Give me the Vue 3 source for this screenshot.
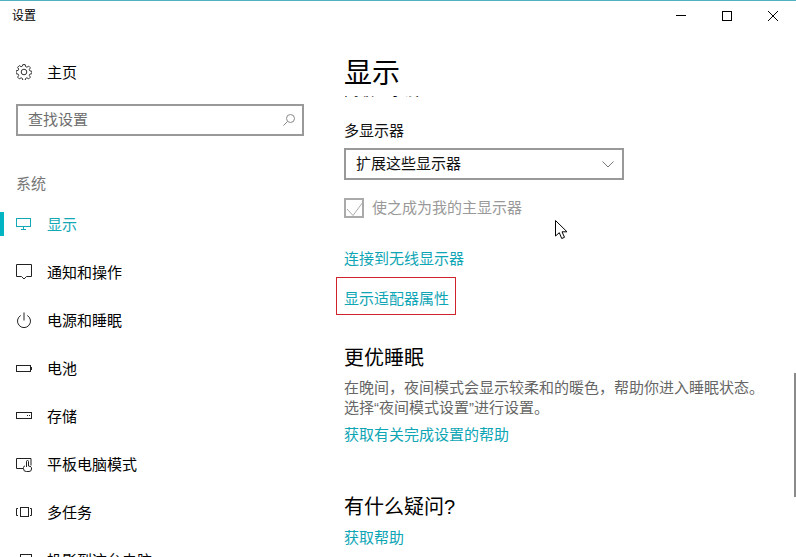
<script setup>
const nav = [
  { label: '显示', icon: 'display', active: true },
  { label: '通知和操作', icon: 'notify' },
  { label: '电源和睡眠', icon: 'power' },
  { label: '电池', icon: 'battery' },
  { label: '存储', icon: 'storage' },
  { label: '平板电脑模式', icon: 'tablet' },
  { label: '多任务', icon: 'multi' },
  { label: '投影到这台电脑', icon: 'project' },
]
</script>

<template>
  <div class="window">
    <header class="titlebar">
      <span class="title">设置</span>
      <div class="controls">
        <svg class="ctl" width="46" height="30" viewBox="0 0 46 30"><path d="M18 14.500h10" stroke="#000" fill="none" /></svg>
        <svg class="ctl" width="46" height="30" viewBox="0 0 46 30"><rect x="18.500" y="10.500" width="9" height="9" stroke="#000" fill="none" /></svg>
        <svg class="ctl" width="46" height="30" viewBox="0 0 46 30"><path d="M18 10l10 10M28 10L18 20" stroke="#000" fill="none" /></svg>
      </div>
    </header>
    <div class="body">
      <aside class="side">
        <div class="home">
          <svg class="icon" width="16" height="16" viewBox="0 0 16 16" fill="none" stroke="#333">
            <circle cx="8" cy="8" r="2.800" />
            <path d="M6.800.6h2.400l.4 2 1.300.6 1.800-1.100 1.700 1.700-1.100 1.800.6 1.300 2 .4v2.400l-2 .4-.6 1.300 1.100 1.800-1.700 1.700-1.800-1.100-1.300.6-.4 2H6.800l-.4-2-1.300-.6-1.800 1.100-1.700-1.700 1.100-1.800-.6-1.300-2-.4V6.800l2-.4.6-1.300-1.100-1.800 1.700-1.700 1.800 1.100 1.300-.6z" />
          </svg>
          <span class="label">主页</span>
        </div>
        <div class="search">
          <span class="lifted">查找设置</span>
          <svg width="12" height="12" viewBox="0 0 12 12" fill="none" stroke="#888">
            <circle cx="7.500" cy="4.500" r="4" />
            <path d="M4.600 7.400L.4 11.600" />
          </svg>
        </div>
        <div class="group">系统</div>
        <nav class="nav">
          <div v-for="item in nav" :key="item.label" class="item" :class="{ active: item.active }">
            <svg class="icon" width="16" height="16" viewBox="0 0 16 16" fill="none" stroke="currentColor">
              <template v-if="item.icon === 'display'">
                <rect x="0.500" y="2.500" width="14" height="8" />
                <path d="M7.500 10.500v3M5 13.500h5" />
              </template>
              <path v-else-if="item.icon === 'notify'" d="M.5.5h15v12H10.500L8 15 5.500 12.500H.5z" />
              <path v-else-if="item.icon === 'power'" d="M8 .5v8M4.700 3.500a6.500 6.500 0 1 0 6.600 0" />
              <template v-else-if="item.icon === 'battery'">
                <rect x="0.500" y="5.500" width="14" height="6" />
                <path d="M15.500 7v3" />
              </template>
              <template v-else-if="item.icon === 'storage'">
                <rect x="0.500" y="4.500" width="15" height="6" />
                <path d="M11 7.500h1M13 7.500h1" />
              </template>
              <template v-else-if="item.icon === 'tablet'">
                <path d="M7 12.500H.5v-10h14.500v7" />
                <path d="M10.500 11V5.500a1 1 0 0 1 2 0V10l2.500.8a1 1 0 0 1 .5.9V13a2.500 2.500 0 0 1-2.500 2.500h-2.500A2.800 2.800 0 0 1 7.500 12.700V11.500a1.500 1.500 0 0 1 1.500-1.500" fill="#fff" />
              </template>
              <template v-else-if="item.icon === 'multi'">
                <rect x="4.500" y="3.500" width="8" height="9" />
                <path d="M2 4.500H.5v7H2M14 4.500h1.500v7H14" />
              </template>
              <template v-else>
                <rect x="4.500" y="2.500" width="11" height="8" />
              </template>
            </svg>
            <span class="label">{{ item.label }}</span>
          </div>
        </nav>
      </aside>
      <main class="main">
        <h1>显示</h1>
        <div class="scroller">
          <div class="cut">高级显示设置</div>
          <div class="sub">多显示器</div>
          <div class="select">
            <span class="lifted">扩展这些显示器</span>
            <svg width="12" height="7" viewBox="0 0 12 7" fill="none" stroke="#777"><path d="M.5.5L6 6l5.500-5.500" /></svg>
          </div>
          <div class="check">
            <span class="box">
              <svg width="20" height="20" viewBox="0 0 20 20" fill="none" stroke="#aaa"><path d="M3 11l6 6.500L19 4" /></svg>
            </span>
            <span>使之成为我的主显示器</span>
          </div>
          <a class="link first">连接到无线显示器</a>
          <div class="marked"><a class="link">显示适配器属性</a></div>
          <h2>更优睡眠</h2>
          <p>在晚间，夜间模式会显示较柔和的暖色，帮助你进入睡眠状态。<br />选择“夜间模式设置”进行设置。</p>
          <a class="link help">获取有关完成设置的帮助</a>
          <h2 class="q">有什么疑问?</h2>
          <a class="link ask">获取帮助</a>
          <div class="bar"></div>
          <svg class="cursor" width="14" height="20" viewBox="0 0 14 20"><path d="M.5.5v15.500l3.800-3.300 2.400 5.800 2.800-1.200-2.500-5.500h5z" fill="#fff" stroke="#000" /></svg>
        </div>
      </main>
    </div>
  </div>
</template>

<style>
html, body { margin: 0; background: #fff; }
</style>

<style scoped>
.window {
  width: 796px;
  height: 557px;
  overflow: hidden;
  background: #fff;
  border-top: 1px solid #4fb3bf;
  box-sizing: border-box;
  font-family: "Liberation Sans", "Noto Sans CJK SC", sans-serif;
  font-size: 15px;
  color: #000;
  display: flex;
  flex-direction: column;
}
.titlebar {
  height: 30px;
  flex: none;
  display: flex;
  justify-content: space-between;
  align-items: flex-start;
  padding-left: 12px;
  font-size: 12px;
}
.title { line-height: 31px; }
.controls { display: flex; }
.ctl { display: block; }
.body { flex: 1; display: flex; min-height: 0; }
.side { width: 328px; flex: none; padding-top: 17px; }
.home, .item { display: flex; align-items: center; height: 48px; padding-left: 16px; gap: 15px; }
.label { line-height: 20px; padding-top: 2px; }
.icon { flex: none; display: block; }
.lifted { padding-bottom: 3px; }
.search {
  margin: 8px 0 0 16px;
  width: 288px;
  height: 32px;
  box-sizing: border-box;
  border: 2px solid #999;
  display: flex;
  align-items: center;
  justify-content: space-between;
  padding: 0 7px 0 10px;
  color: #6e6e6e;
}
.group { margin: 38px 0 0 16px; height: 26px; line-height: 20px; color: #777; }
.item { position: relative; color: #222; }
.item .label { color: #000; }
.item.active { color: #14a8b6; }
.item.active .label { color: #14a8b6; }
.item.active::before {
  content: "";
  position: absolute;
  left: 0;
  top: 12px;
  width: 4px;
  height: 24px;
  background: #00b4c4;
}
.main { flex: 1; min-width: 0; display: flex; flex-direction: column; }
h1 { margin: 19px 0 0 16px; font-size: 28px; font-weight: 400; line-height: 48px; height: 46px; }
.scroller { flex: 1; min-height: 0; overflow: hidden; position: relative; padding-left: 16px; }
.cut { margin-top: -16px; height: 20px; line-height: 20px; }
.sub { margin-top: 21px; line-height: 20px; color: #111; }
.select {
  margin-top: 7px;
  width: 280px;
  height: 32px;
  box-sizing: border-box;
  border: 2px solid #999;
  display: flex;
  align-items: center;
  justify-content: space-between;
  padding: 0 8px 0 10px;
  color: #111;
}
.check { margin-top: 18px; display: flex; align-items: center; gap: 8px; color: #999; line-height: 20px; }
.box { width: 20px; height: 20px; box-sizing: border-box; border: 2px solid #aaa; display: block; overflow: hidden; }
.box svg { display: block; margin: -2px; }
.link { display: block; color: #0ea5b5; line-height: 20px; }
.first { margin-top: 31px; }
.marked {
  margin: 8px 0 0 -8px;
  width: 120px;
  height: 38px;
  box-sizing: border-box;
  border: 1px solid #d0222b;
  padding: 11px 0 0 7px;
}
h2 { margin: 29px 0 0; font-size: 20px; font-weight: 400; line-height: 28px; }
p { margin: 6px 0 0; line-height: 20px; color: #666; white-space: nowrap; }
.help { margin-top: 7px; }
.q { margin-top: 48px; }
.ask { margin-top: 7px; }
.bar { position: absolute; right: 0; top: 277px; width: 2px; height: 124px; background: #8a8a8a; }
.cursor { position: absolute; left: 227px; top: 124px; }
</style>
